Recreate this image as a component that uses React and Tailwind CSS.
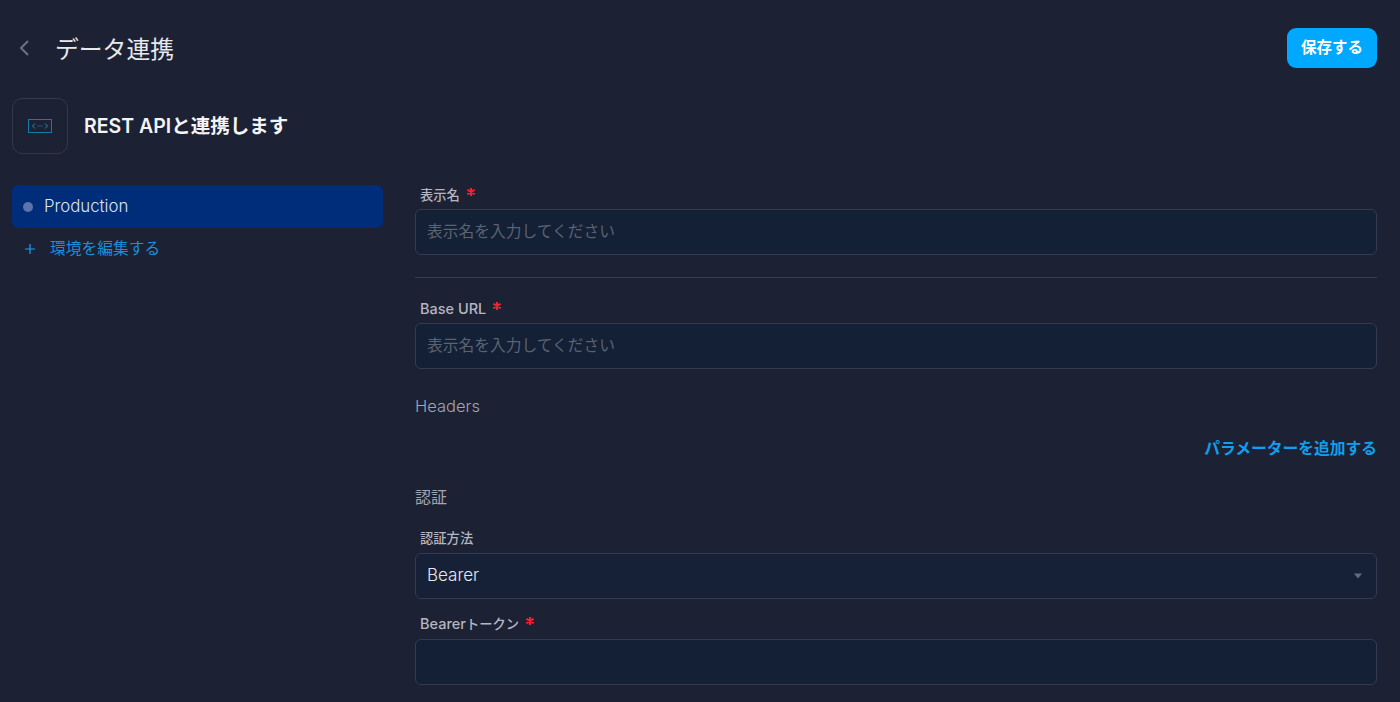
import React from "react";

const FONT = "font-['Inter','Noto_Sans_CJK_JP',sans-serif]";

function Label({ children, required, className = "" }) {
  return (
    <div className={`flex h-[14px] items-center pl-[5px] text-[13.3px] font-medium leading-[14px] text-[#b4b6c0] ${className}`}>
      <span>{children}</span>
      {required && (
        <svg className="ml-[7px] -mt-[6px]" width="8" height="8" viewBox="0 0 8 8" aria-hidden="true">
          <path d="M4 .5v7M1 2.2l6 3.6M7 2.2L1 5.8" stroke="#f5222d" strokeWidth="2" strokeLinecap="round" />
        </svg>
      )}
    </div>
  );
}

function Field({ placeholder }) {
  return (
    <div className="flex h-[46px] items-center rounded-[6px] border border-[#343b50] bg-[#132036] px-[11px] text-[15.75px] text-[#5b6272]">
      {placeholder}
    </div>
  );
}

export default function App() {
  return (
    <div className={`${FONT} flex h-[702px] flex-col overflow-hidden bg-[#1d2134] pl-[12px] pr-[23px] text-white`}>
      <header className="flex h-[98px] shrink-0 items-start justify-between pt-[28px]">
        <div className="flex h-[40px] items-center">
          <svg className="ml-[6px]" width="12" height="18" viewBox="0 0 12 18" fill="none" aria-hidden="true">
            <path d="M10 2L3 9l7 7" stroke="#6d7180" strokeWidth="2" />
          </svg>
          <h1 className="ml-[25px] mt-[4px] text-[23.8px] font-normal leading-none text-[#e8e9ec]">データ連携</h1>
        </div>
        <button className="h-[40px] w-[90px] rounded-[9px] bg-[#00a8ff] text-[15.5px] font-semibold text-white">保存する</button>
      </header>

      <div className="flex h-[56px] shrink-0 items-center gap-[16px]">
        <div className="flex h-[56px] w-[56px] items-center justify-center rounded-[10px] border border-[#343849]">
          <svg width="24" height="14" viewBox="0 0 24 14" fill="none" aria-hidden="true">
            <rect x="0.5" y="0.5" width="23" height="13" stroke="#0f7ea6" />
            <path d="M7 4.5L4.5 7 7 9.5M17 4.5L19.5 7 17 9.5" stroke="#1592bd" />
            <path d="M9.5 7h5" stroke="#1592bd" strokeDasharray="1 1" />
          </svg>
        </div>
        <div className="mt-[1px] text-[19.5px] font-semibold leading-none text-[#f3f4f6]">REST APIと連携します</div>
      </div>

      <div className="flex min-h-0 flex-1 gap-[32px] pt-[31px]">
        <aside className="w-[371px] shrink-0">
          <div className="flex h-[43px] items-center rounded-[6px] bg-[#002d7a] pl-[11px] text-[#dfe3ee]">
            <span className="h-[10px] w-[10px] rounded-full bg-[#5c74ab]" />
            <span className="ml-[11px] text-[16.8px] font-light leading-none">Production</span>
          </div>
          <div className="mt-[12px] flex h-[18px] items-center pl-[13px] text-[#1a8fd8]">
            <svg width="10" height="10" viewBox="0 0 10 10" aria-hidden="true">
              <path d="M5 0v10M0 5h10" stroke="#17a2ee" strokeWidth="1.2" />
            </svg>
            <span className="ml-[15px] text-[15.75px] leading-none">環境を編集する</span>
          </div>
        </aside>

        <main className="min-w-0 flex-1">
          <Label required className="mt-[3px]">表示名</Label>
          <div className="mt-[7px]"><Field placeholder="表示名を入力してください" /></div>
          <div className="mt-[22px] h-px bg-[#3a3e4f]" />
          <Label required className="mt-[24px]"><span className="text-[14.5px]">Base URL</span></Label>
          <div className="mt-[7px]"><Field placeholder="表示名を入力してください" /></div>
          <div className="mt-[27px] text-[16.5px] font-light leading-[20px] text-[#a3a6b1]">Headers</div>
          <div className="mt-[23px] text-right text-[15.75px] font-semibold leading-[20px] text-[#0f9fee]">パラメーターを追加する</div>
          <div className="mt-[28px] text-[16px] leading-[20px] text-[#a3a6b1]">認証</div>
          <Label className="mt-[24px]">認証方法</Label>
          <div className="mt-[8px] flex h-[46px] items-center justify-between rounded-[6px] border border-[#343b50] bg-[#162138] pl-[11px] pr-[14px] text-[17px] font-light text-[#e6e8ee]">
            <span>Bearer</span>
            <svg width="8" height="6" viewBox="0 0 8 6" aria-hidden="true"><path d="M0 .5h8L4 5.5z" fill="#666b7a" /></svg>
          </div>
          <Label required className="mt-[18px]"><span className="text-[14.5px]">Bearer</span>トークン</Label>
          <div className="mt-[8px]"><Field placeholder="" /></div>
        </main>
      </div>
    </div>
  );
}
